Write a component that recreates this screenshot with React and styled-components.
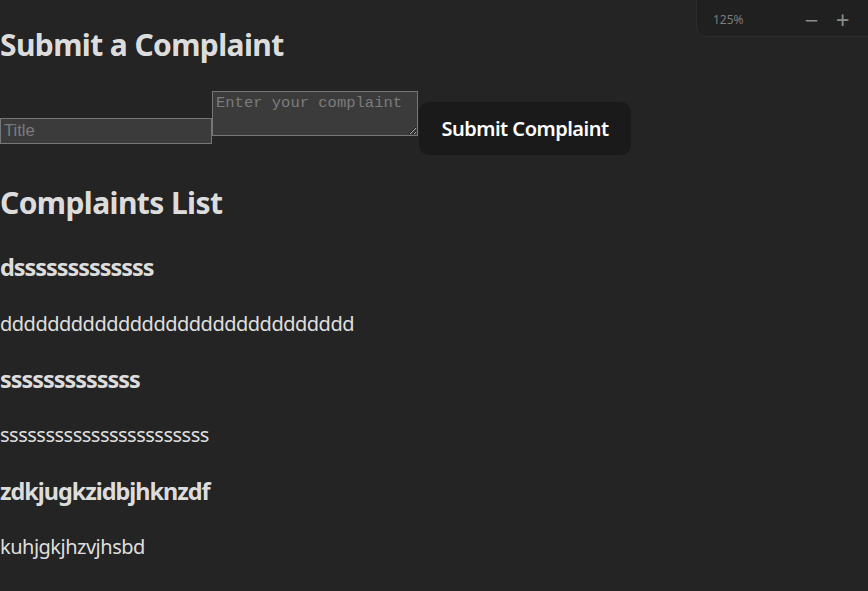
import styled, { createGlobalStyle } from 'styled-components'

const GlobalStyle = createGlobalStyle`
  html, body {
    margin: 0;
    padding: 0;
    background-color: #242424;
  }
  body {
    font-family: "Noto Sans", "Open Sans", sans-serif;
    font-size: 20px;
    line-height: 1.5;
    color: rgba(255, 255, 255, 0.87);
    min-height: 100vh;
  }
`

const Page = styled.div`
  padding: 1px 0 0;
  margin-top: -1px;
`

const Heading = styled.h2`
  font-size: 30px;
  font-weight: 700;
  margin: ${(p) => (p.$first ? '22px 0 24px' : '25px 0')};
  letter-spacing: -0.6px;
`

const Form = styled.form`
  display: block;
  line-height: 1.5;
  white-space: nowrap;
`

const TitleInput = styled.input`
  box-sizing: border-box;
  width: 212px;
  height: 26px;
  padding: 1px 3px;
  margin: 0;
  border: 1px solid #767676;
  background-color: #3b3b3b;
  color: #dedede;
  font-family: "Liberation Sans", Arial, sans-serif;
  font-size: 16.6px;
  vertical-align: baseline;

  &::placeholder {
    color: #7b7b7b;
  }
`

const ComplaintArea = styled.textarea`
  box-sizing: border-box;
  width: 206px;
  height: 45px;
  padding: 2px 3px;
  margin: 0;
  border: 1px solid #767676;
  background-color: #3b3b3b;
  color: #dedede;
  font-family: "Liberation Mono", "DejaVu Sans Mono", monospace;
  font-size: 15.5px;
  line-height: 1.2;
  vertical-align: baseline;

  &::placeholder {
    color: #7b7b7b;
  }
`

const SubmitButton = styled.button`
  box-sizing: border-box;
  height: 53px;
  width: 212px;
  margin-left: 1px;
  padding: 0 20px;
  border-radius: 10px;
  border: 1px solid transparent;
  background-color: #1a1a1a;
  color: #ffffff;
  font-family: "Noto Sans", "Open Sans", sans-serif;
  font-size: 20px;
  font-weight: 600;
  letter-spacing: -0.5px;
  white-space: nowrap;
  cursor: pointer;
  vertical-align: baseline;
`

const ItemTitle = styled.h3`
  font-size: 23.4px;
  font-weight: 700;
  margin: 23.4px 0;
  letter-spacing: -1px;
`

const ItemText = styled.p`
  margin: 20px 0;
  letter-spacing: -0.5px;
`

const ZoomPopup = styled.div`
  position: absolute;
  top: -10px;
  right: -10px;
  width: 182px;
  height: 47px;
  box-sizing: border-box;
  padding: 12px 19px 0 16px;
  display: flex;
  align-items: center;
  background-color: #202020;
  border: 1px solid #2c2c2c;
  border-radius: 10px;
  font-family: "Noto Sans", sans-serif;
  font-size: 12px;
  color: #7c7c7c;
`

const ZoomValue = styled.span`
  flex: 1;
`

const ZoomButton = styled.span`
  width: 31px;
  text-align: center;
  font-size: 24px;
  line-height: 1;
  color: #8a8a8a;
`

const complaints = [
  { title: 'dsssssssssssss', text: 'dddddddddddddddddddddddddddddd' },
  { title: 'sssssssssssss', text: 'sssssssssssssssssssssss' },
  { title: 'zdkjugkzidbjhknzdf', text: 'kuhjgkjhzvjhsbd' },
]

function App() {
  return (
    <>
      <GlobalStyle />
      <Page>
        <Heading $first>Submit a Complaint</Heading>
        <Form onSubmit={(e) => e.preventDefault()}>
          <TitleInput type="text" placeholder="Title" />
          <ComplaintArea placeholder="Enter your complaint" />
          <SubmitButton type="submit">Submit Complaint</SubmitButton>
        </Form>
        <Heading>Complaints List</Heading>
        {complaints.map((c, i) => (
          <div key={i}>
            <ItemTitle>{c.title}</ItemTitle>
            <ItemText>{c.text}</ItemText>
          </div>
        ))}
      </Page>
      <ZoomPopup>
        <ZoomValue>125%</ZoomValue>
        <ZoomButton>−</ZoomButton>
        <ZoomButton>+</ZoomButton>
      </ZoomPopup>
    </>
  )
}

export default App
